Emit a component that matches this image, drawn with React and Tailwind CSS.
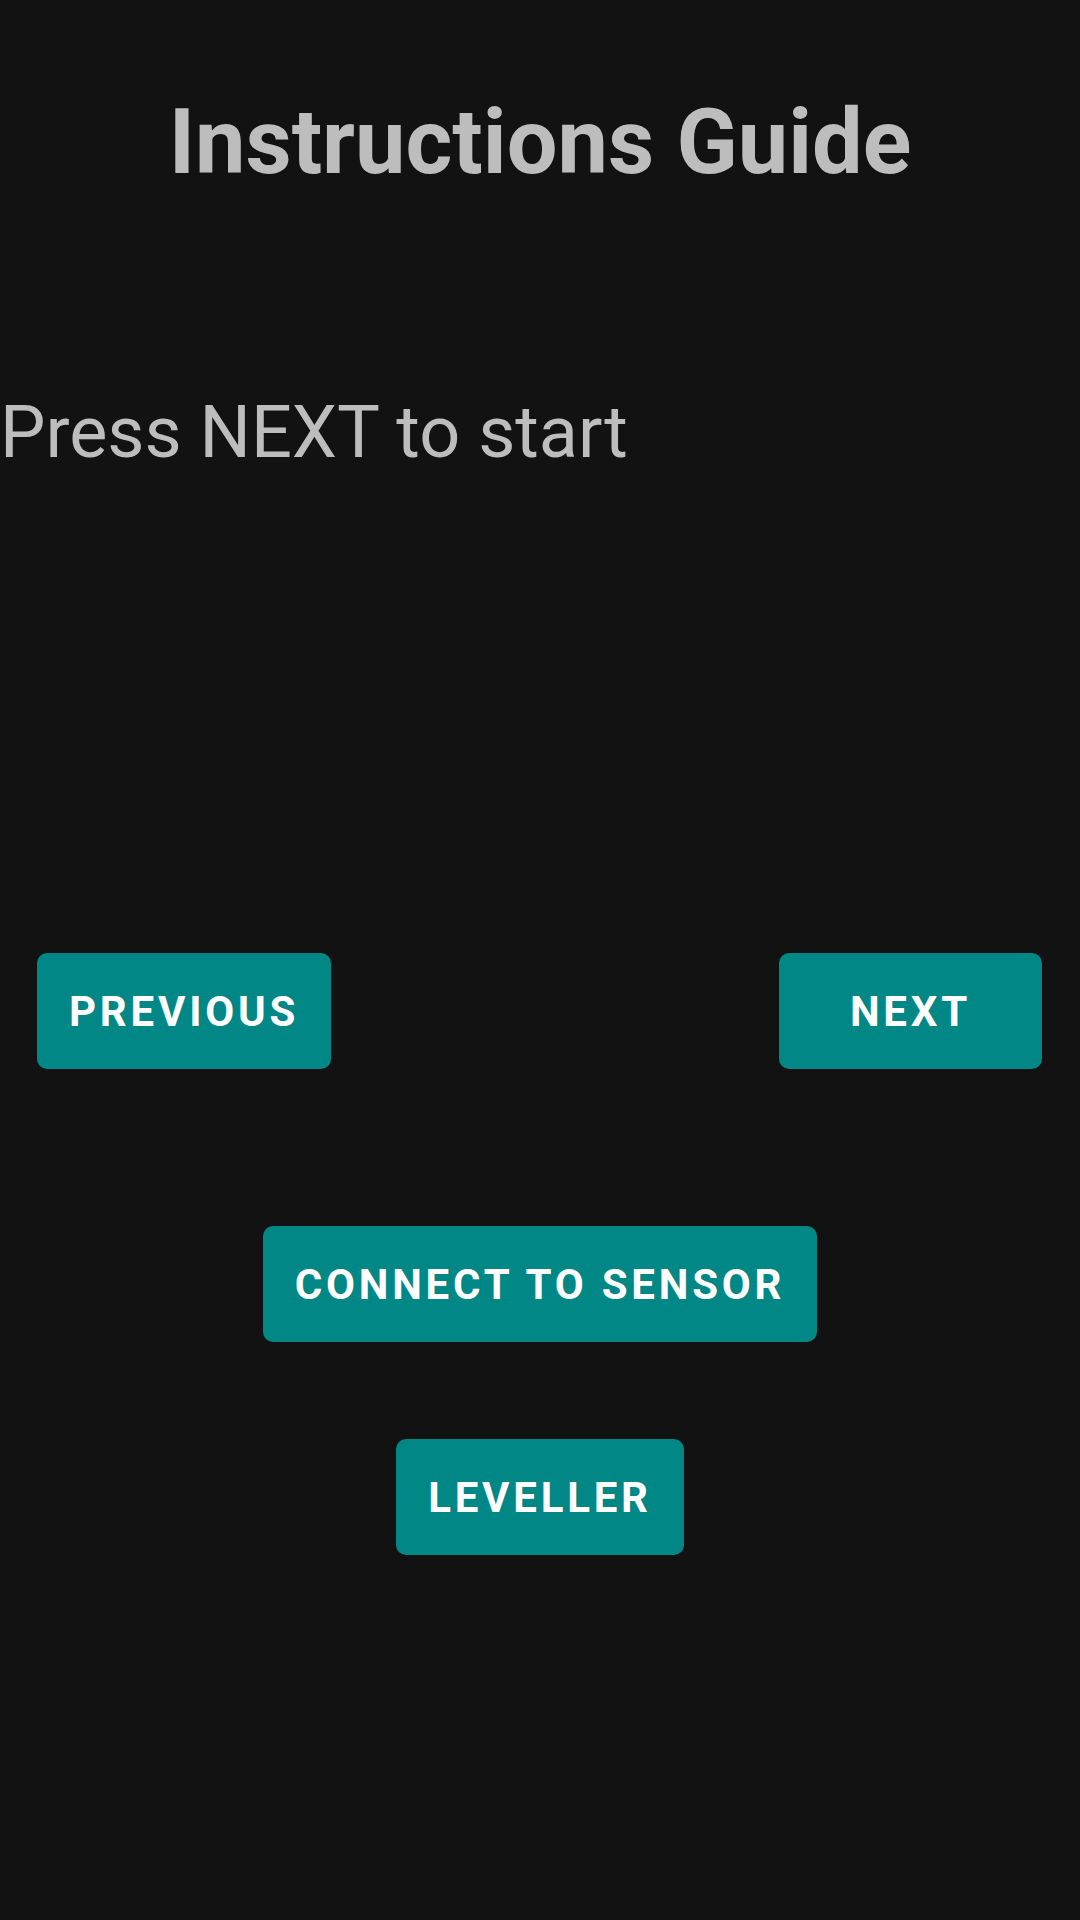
// App.jsx
const btn =
  "h-[116px] rounded-[10px] bg-[#018786] text-white text-[42px] font-bold tracking-[0.09em] leading-none " +
  "flex items-center justify-center px-[32px] pt-[2px]";

export default function App() {
  return (
    <div
      className="w-[1080px] h-[1920px] bg-[#121212] overflow-hidden"
      style={{ fontFamily: "Roboto, 'Noto Sans', sans-serif" }}
    >
      <h1 className="pt-[98px] text-center text-[90px] leading-none font-bold text-[#bdbdbd]">
        Instructions Guide
      </h1>

      <p className="mt-[209px] text-[72px] leading-none text-[#bdbdbd]">Press NEXT to start</p>

      <div className="mt-[484px] flex justify-between pl-[37px] pr-[38px]">
        <button className={btn}>PREVIOUS</button>
        <button className={`${btn} w-[263px]`}>NEXT</button>
      </div>

      <div className="mt-[157px] flex justify-center">
        <button className={btn}>CONNECT TO SENSOR</button>
      </div>

      <div className="mt-[97px] flex justify-center">
        <button className={btn}>LEVELLER</button>
      </div>
    </div>
  );
}
